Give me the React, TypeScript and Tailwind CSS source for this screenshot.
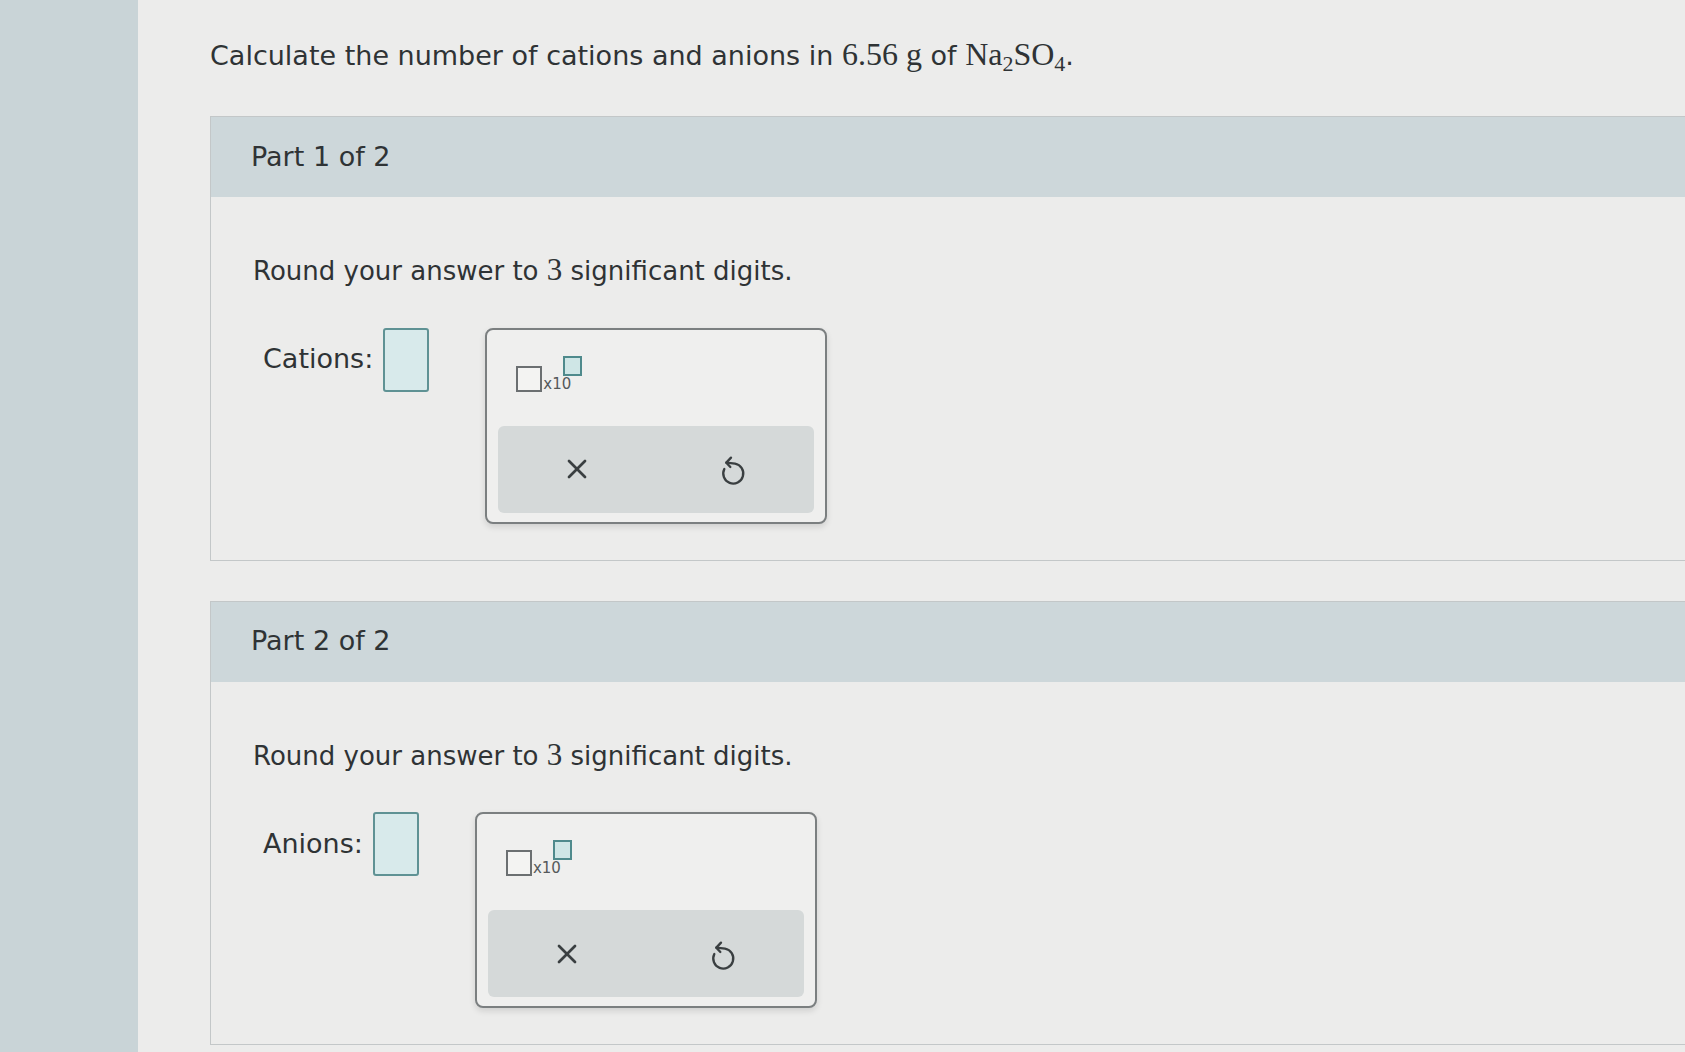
import { X } from 'lucide-react'

const sans = { fontFamily: '"DejaVu Sans", Verdana, sans-serif' }
const serif = { fontFamily: '"Liberation Serif", "Times New Roman", serif' }

function UndoIcon() {
  return (
    <svg width="44" height="44" viewBox="0 0 132 132" fill="none" stroke="#3a3f41" strokeWidth="7" strokeLinecap="round" strokeLinejoin="round">
      <path d="M34 66 A30 30 0 1 0 66 50 L40 47" />
      <path d="M54 32 L40 47 L52 60" />
    </svg>
  )
}

function SciTemplate() {
  return (
    <div className="flex items-end">
      <div className="h-[26px] w-[26px] border-2 border-[#6b6f71] bg-[#f3f3f2]" />
      <span className="ml-[1px] text-[15px] leading-none text-[#55595b]" style={sans}>
        x10
      </span>
      <div className="mb-[16px] -ml-[8px] h-[20px] w-[19px] border-2 border-[#4f8a8c] bg-[#cfe6e6]" />
    </div>
  )
}

function AnswerPart({ part, label }: { part: string; label: string }) {
  return (
    <section className="-mr-8 border border-[#c3c7c8] bg-[#ececeb]">
      <header className="flex h-[80px] items-center bg-[#cdd7da] pl-[40px] text-[27px] text-[#2f3335]" style={sans}>
        {part}
      </header>
      <div className="px-[42px] pb-[36px] pt-[50px]">
        <p className="text-[26px] text-[#2f3335]" style={sans}>
          Round your answer to <span className="text-[31px]" style={serif}>3</span> significant digits.
        </p>
        <div className="mt-[34px] flex items-start pl-[10px]">
          <div className="flex items-center gap-[10px]">
            <span className="text-[27px] text-[#2f3335]" style={sans}>
              {label}:
            </span>
            <div className="h-[64px] w-[46px] rounded-[3px] border-2 border-[#5f9294] bg-[#d8eaeb]" />
          </div>
          <div className="ml-[56px] flex h-[196px] w-[342px] flex-col rounded-[8px] border-2 border-[#7b7f80] bg-[#efefee] px-[11px] pb-[9px] pt-[26px] shadow-[0_3px_6px_rgba(0,0,0,0.12)]">
            <div className="pl-[18px]">
              <SciTemplate />
            </div>
            <div className="mt-auto grid h-[87px] grid-cols-2 place-items-center rounded-[6px] bg-[#d5d9d9]">
              <X size={32} strokeWidth={2} color="#3a3f41" />
              <UndoIcon />
            </div>
          </div>
        </div>
      </div>
    </section>
  )
}

export default function App() {
  return (
    <div className="flex h-[1052px] w-full overflow-hidden bg-[#ececeb]">
      <div className="w-[138px] shrink-0 bg-[#c9d4d7]" />
      <main className="min-w-0 flex-1 overflow-hidden pl-[72px] pt-[30px]">
        <h1 className="text-[27px] text-[#2f3335]" style={sans}>
          Calculate the number of cations and anions in{' '}
          <span className="text-[32px]" style={serif}>6.56 g</span> of{' '}
          <span className="text-[32px]" style={serif}>
            Na<sub className="text-[22px]">2</sub>SO<sub className="text-[22px]">4</sub>
          </span>
          .
        </h1>
        <div className="mt-[38px] flex flex-col gap-[40px]">
          <AnswerPart part="Part 1 of 2" label="Cations" />
          <AnswerPart part="Part 2 of 2" label="Anions" />
        </div>
      </main>
    </div>
  )
}
